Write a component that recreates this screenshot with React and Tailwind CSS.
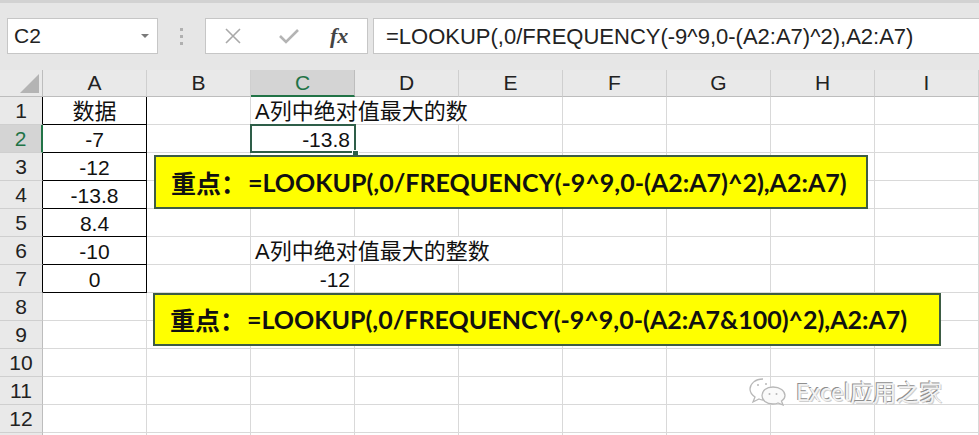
import React from 'react';

const cols = ['A', 'B', 'C', 'D', 'E', 'F', 'G', 'H', 'I'];
const rowCount = 13;

const dataA = ['数据', '-7', '-12', '-13.8', '8.4', '-10', '0'];

const sans = 'font-["Liberation_Sans","Noto_Sans_CJK_SC",sans-serif]';

function Toolbar() {
  return (
    <div className="h-[70px] bg-[#e6e6e6] border-t-[3px] border-[#d2d2d2] flex items-start pt-[15px] pl-[7px]">
      <div className="w-[151px] h-[36px] bg-white border border-[#c6c6c6] flex items-center justify-between pl-[6px] pr-[8px]">
        <span className="text-[21px] text-[#222]">C2</span>
        <span className="w-0 h-0 border-l-[4px] border-r-[4px] border-t-[4px] border-l-transparent border-r-transparent border-t-[#7a7a7a]" />
      </div>
      <div className="w-[47px] h-[36px] flex flex-col items-center justify-center gap-[4px]">
        <span className="w-[3px] h-[3px] bg-[#b0b0b0]" />
        <span className="w-[3px] h-[3px] bg-[#b0b0b0]" />
        <span className="w-[3px] h-[3px] bg-[#b0b0b0]" />
      </div>
      <div className="w-[163px] h-[36px] bg-white border border-[#c6c6c6] flex items-center pl-[18px]">
        <svg width="18" height="18" viewBox="0 0 18 18" className="mr-[36px]">
          <path d="M2 2 L16 16 M16 2 L2 16" stroke="#a9a9a9" strokeWidth="1.6" fill="none" />
        </svg>
        <svg width="22" height="18" viewBox="0 0 22 18" className="mr-[30px]">
          <path d="M2 9 L8 15 L20 3" stroke="#b4b4b4" strokeWidth="2.6" fill="none" />
        </svg>
        <span className='font-["Liberation_Serif",serif] italic font-bold text-[22px] text-[#444] leading-none'>fx</span>
      </div>
      <div className="ml-[5px] flex-1 h-[36px] bg-white border border-r-0 border-[#c6c6c6] flex items-center pl-[12px]">
        <span className="text-[22px] text-[#222] whitespace-nowrap">=LOOKUP(,0/FREQUENCY(-9^9,0-(A2:A7)^2),A2:A7)</span>
      </div>
    </div>
  );
}

function HeaderRow() {
  return (
    <>
      <div className="bg-[#e9e9e9] border-r border-b border-[#bdbdbd] relative">
        <span className="absolute right-[3px] bottom-[3px] w-0 h-0 [border-bottom:19px_solid_#b4b4b4] [border-left:19px_solid_transparent]" />
      </div>
      {cols.map((c) =>
        c === 'C' ? (
          <div key={c} className="bg-[#d4d4d4] border-r border-[#bdbdbd] border-b-2 border-b-[#217346] flex items-center justify-center text-[21px] text-[#217346]">
            {c}
          </div>
        ) : (
          <div key={c} className="bg-[#e9e9e9] border-r border-b border-[#cfcfcf] border-b-[#bdbdbd] flex items-center justify-center text-[21px] text-[#222]">
            {c}
          </div>
        )
      )}
    </>
  );
}

function RowHeader({ n }) {
  if (n === 2) {
    return (
      <div className="bg-[#d4d4d4] border-b border-[#cfcfcf] border-r-2 border-r-[#217346] flex items-center justify-center text-[21px] text-[#217346]">
        {n}
      </div>
    );
  }
  const edge = n <= 7 ? 'border-r-black' : 'border-r-[#bdbdbd]';
  // the last row only peeks in under the window edge, so it carries no number
  return (
    <div className={`bg-[#e9e9e9] border-b border-[#cfcfcf] border-r ${edge} flex items-center justify-center text-[21px] text-[#222]`}>
      {n < rowCount ? n : ''}
    </div>
  );
}

function Cell({ children, className = '' }) {
  return (
    <div className={`border-r border-b border-[#d9d9d9] flex items-center text-[21px] text-[#111] whitespace-nowrap leading-none pt-[2px] ${className}`}>
      {children}
    </div>
  );
}

function SheetRow({ n }) {
  const cells = [];
  // column A, boxed in black for the data block
  if (n <= 7) {
    cells.push(
      <Cell key="A" className={`border-r-black border-b-black justify-center ${n === 1 ? 'text-[22px]' : ''}`}>
        {dataA[n - 1]}
      </Cell>
    );
  } else {
    cells.push(<Cell key="A" />);
  }
  cells.push(<Cell key="B" />);

  if (n === 1 || n === 6) {
    cells.push(
      <Cell key="C" className="col-span-3 pl-[4px] text-[22px]">
        {n === 1 ? 'A列中绝对值最大的数' : 'A列中绝对值最大的整数'}
      </Cell>
    );
  } else if (n === 2) {
    cells.push(
      <Cell key="C" className="relative justify-end pr-[4px]">
        -13.8
        <span className="absolute -left-[1px] -top-[1px] w-[106px] h-[29px] border-2 border-[#2e5e48]" />
        <span className="absolute -right-[5px] -bottom-[5px] w-[7px] h-[7px] bg-[#2e5e48] border border-white" />
      </Cell>
    );
    cells.push(<Cell key="D" />, <Cell key="E" />);
  } else if (n === 7) {
    cells.push(
      <Cell key="C" className="justify-end pr-[4px]">
        -12
      </Cell>
    );
    cells.push(<Cell key="D" />, <Cell key="E" />);
  } else {
    cells.push(<Cell key="C" />, <Cell key="D" />, <Cell key="E" />);
  }
  ['F', 'G', 'H', 'I'].forEach((c) => cells.push(<Cell key={c} />));

  return (
    <>
      <RowHeader n={n} />
      {cells}
    </>
  );
}

function Callout({ className, formula }) {
  return (
    <div className={`absolute bg-[#ffff00] border-2 border-[#3d5c44] flex items-center pl-[15px] whitespace-nowrap ${className}`}>
      <span className='font-["Noto_Sans_CJK_SC",sans-serif] font-bold text-[25px] text-[#111] leading-none'>重点：</span>
      <span className='font-["Lato","Noto_Sans_CJK_SC",sans-serif] font-bold text-[25px] text-[#111] leading-none ml-[2px]'>{formula}</span>
    </div>
  );
}

function WeChatMark() {
  return (
    <div className="absolute left-[748px] top-[304px] flex items-center gap-[8px] pointer-events-none">
      <svg width="40" height="30" viewBox="0 0 40 30" fill="none">
        <path d="M15 3 C7 3 2 8 2 13 C2 16 4 19 7 21 L5 26 L11 23 C12 23.5 14 24 15 24" stroke="#b8b8b8" strokeWidth="1.3" />
        <path d="M25 11 C18 11 14 15 14 19.5 C14 24 18 28 25 28 C27 28 29 27.6 30 27 L35 29 L33.5 25 C36 23.5 37 21.5 37 19.5 C37 15 32 11 25 11 Z" stroke="#b8b8b8" strokeWidth="1.3" fill="#fafafa" />
        <circle cx="10" cy="9" r="1" fill="#b8b8b8" />
        <circle cx="18" cy="8" r="1" fill="#b8b8b8" />
        <circle cx="21.5" cy="18" r="1" fill="#b8b8b8" />
        <circle cx="28.5" cy="18" r="1" fill="#b8b8b8" />
      </svg>
      <span className='font-["Noto_Sans_CJK_SC",sans-serif] text-[23px] text-[#f3f3f3] [text-shadow:-1px_-1px_0_#8f8f8f,1px_1px_0_#cfcfcf] whitespace-nowrap'>
        Excel应用之家
      </span>
    </div>
  );
}

export default function App() {
  const rows = [];
  for (let i = 1; i <= rowCount; i++) rows.push(<SheetRow key={i} n={i} />);

  return (
    <div className={`w-[979px] h-[435px] overflow-hidden bg-white ${sans}`}>
      <Toolbar />
      <div className="relative">
        <div className="grid grid-cols-[43px_repeat(9,104px)] grid-rows-[27px_repeat(13,28px)]">
          <HeaderRow />
          {rows}
        </div>
        <Callout className="left-[154px] top-[85px] w-[714px] h-[54px]" formula="=LOOKUP(,0/FREQUENCY(-9^9,0-(A2:A7)^2),A2:A7)" />
        <Callout className="left-[153px] top-[223px] w-[788px] h-[53px]" formula="=LOOKUP(,0/FREQUENCY(-9^9,0-(A2:A7&100)^2),A2:A7)" />
        <WeChatMark />
      </div>
    </div>
  );
}
